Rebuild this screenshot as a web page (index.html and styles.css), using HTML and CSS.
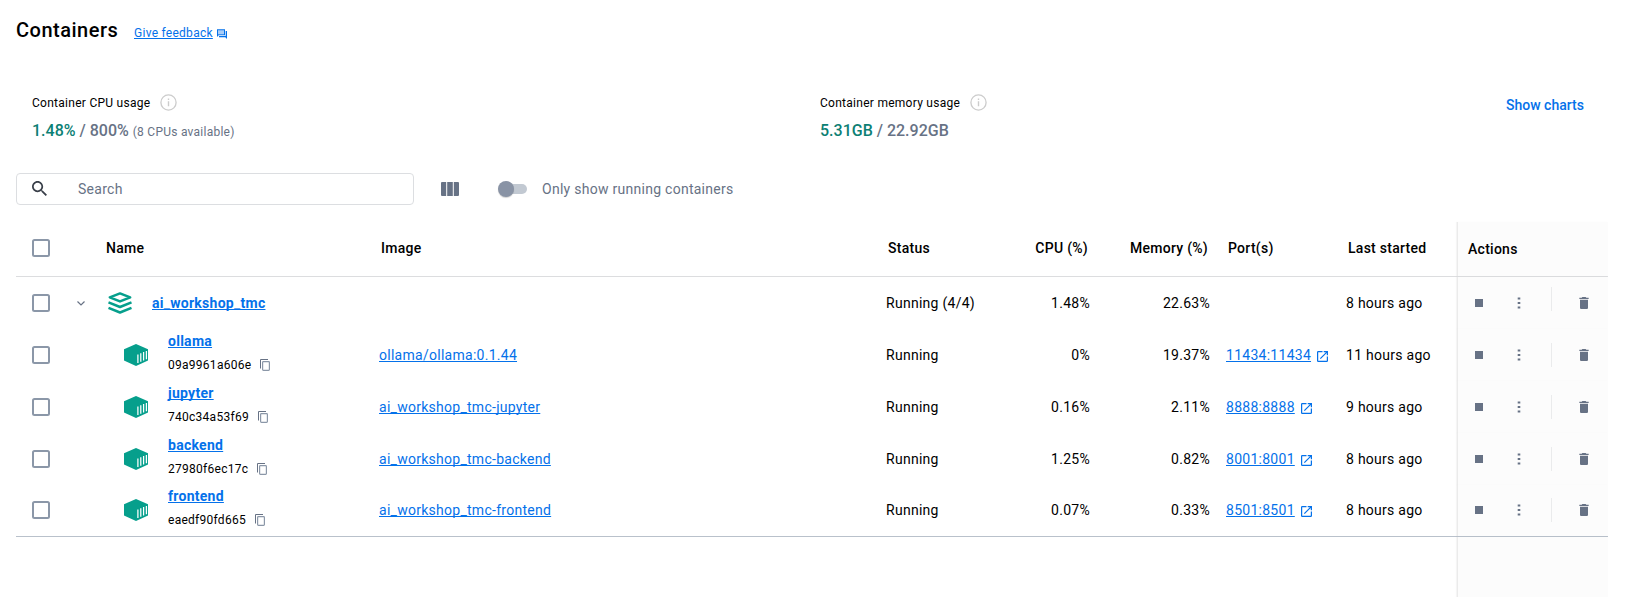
FILE: index.html
```html
<!DOCTYPE html>
<html lang="en">
<head>
<meta charset="utf-8">
<title>Containers</title>
<link rel="stylesheet" href="styles.css">
</head>
<body>
<svg class="sprite" aria-hidden="true">
  <symbol id="i-box" viewBox="0 0 24 22"><path fill="#069f8c" d="M12 0 24 5.3v11.2L12 22 0 16.5V5.3z"/><path stroke="#fff" stroke-width="1.25" d="M13.9 10.4v8.6M16.8 9.3v8.5M19.6 8.1v8.4M22.4 7v8.3" fill="none"/></symbol>
  <symbol id="i-stack" viewBox="0 0 24 22"><g fill="none" stroke="#069f8c" stroke-width="2.5" stroke-linejoin="round"><path d="M12 1.400 22.200 5.300 12 9.400 1.800 5.300z"/><path d="M.5 10.300 12 15l11.500-4.700M.5 15.800 12 20.500l11.500-4.700"/></g></symbol>
  <symbol id="i-copy" viewBox="0 0 10 12"><path fill="none" stroke="#677285" stroke-width="1" d="M.5 9.500v-9H8"/><rect x="2.600" y="2.600" width="6.800" height="8.800" rx=".8" fill="none" stroke="#8b97a8" stroke-width="1.200"/></symbol>
  <symbol id="i-open" viewBox="3 3 18 18"><path fill="#0471ea" d="M19 19H5V5h7V3H5a2 2 0 0 0-2 2v14a2 2 0 0 0 2 2h14c1.100 0 2-.9 2-2v-7h-2v7zM14 3v2h3.590l-9.830 9.830 1.410 1.410L19 6.410V10h2V3h-7z"/></symbol>
  <symbol id="i-dots" viewBox="0 0 4 12"><path fill="#677285" d="M.7.4h2.600v2.200H.7zM.7 4.900h2.600v2.200H.7zM.7 9.400h2.600v2.200H.7z"/></symbol>
  <symbol id="i-trash" viewBox="5 3 14 18"><path fill="#677285" d="M6 19c0 1.100.9 2 2 2h8c1.100 0 2-.9 2-2V7H6v12zM19 4h-3.500l-1-1h-5l-1 1H5v2h14V4z"/></symbol>
  <symbol id="i-info" viewBox="0 0 17 17"><circle cx="8.500" cy="8.500" r="7.600" fill="none" stroke="#ccc" stroke-width="1.300"/><path fill="#ccc" d="M7.800 4.500h1.400V6H7.800zM7.800 7.300h1.400v5H7.800z"/></symbol>
</svg>

<header class="page-header">
  <h1 class="title">Containers</h1>
  <a class="feedback">Give feedback</a>
  <svg class="forum" viewBox="0 0 10 10"><path fill="#a9cdf7" d="M1 1h6v4H1z"/><path fill="#0471ea" d="M0 .2h8v6H1.700L0 7.900zM1 1.200v4h6v-4zM8.700 2H10v8L8.300 8.200H2V7h6.700z"/></svg>
</header>

<section class="usage">
  <div class="stat stat-cpu">
    <div class="stat-label">Container CPU usage<svg class="info"><use href="#i-info"/></svg></div>
    <div class="stat-value"><b>1.48%</b> / 800% <small>(8 CPUs available)</small></div>
  </div>
  <div class="stat stat-memory">
    <div class="stat-label">Container memory usage<svg class="info"><use href="#i-info"/></svg></div>
    <div class="stat-value"><b>5.31GB</b> / 22.92GB</div>
  </div>
  <a class="show-charts">Show charts</a>
</section>

<section class="toolbar">
  <div class="search">
    <svg class="search-icon" viewBox="3 3 17.500 17.500"><path fill="#393f49" d="M15.500 14h-.79l-.28-.27C15.410 12.590 16 11.110 16 9.500 16 5.910 13.090 3 9.500 3S3 5.910 3 9.500 5.910 16 9.500 16c1.610 0 3.090-.59 4.230-1.570l.27.28v.79l5 4.990L20.490 19l-4.990-5zm-6 0C7.010 14 5 11.990 5 9.500S7.010 5 9.500 5 14 7.010 14 9.500 11.990 14 9.500 14z"/></svg>
    <span>Search</span>
  </div>
  <svg class="columns" viewBox="0 0 18 14"><path fill="#677285" d="M1 0h4.200v14H1a1 1 0 0 1-1-1V1a1 1 0 0 1 1-1zM6.200 0h5.600v14H6.200zM12.800 0H17a1 1 0 0 1 1 1v12a1 1 0 0 1-1 1h-4.200z"/></svg>
  <span class="switch"><span class="thumb"></span></span>
  <span class="switch-label">Only show running containers</span>
</section>

<main class="table">
  <div class="row head">
    <div class="check"><i></i></div>
    <div class="name">Name</div>
    <div class="image">Image</div>
    <div class="status">Status</div>
    <div class="num">CPU (%)</div>
    <div class="num">Memory (%)</div>
    <div class="port">Port(s)</div>
    <div class="started">Last started</div>
    <div class="actions">Actions</div>
  </div>

  <div class="row group">
    <div class="check"><i></i><svg class="chevron" viewBox="0 0 8 5"><path d="M.5.500 4 4 7.500.5" fill="none" stroke="#677285" stroke-width="1.200"/></svg></div>
    <div class="name"><svg class="kind"><use href="#i-stack"/></svg><a>ai_workshop_tmc</a></div>
    <div class="image"></div>
    <div class="status">Running (4/4)</div>
    <div class="num">1.48%</div>
    <div class="num">22.63%</div>
    <div class="port"></div>
    <div class="started">8 hours ago</div>
    <div class="actions"><span class="stop"></span><svg class="dots"><use href="#i-dots"/></svg><span class="divider"></span><svg class="trash"><use href="#i-trash"/></svg></div>
  </div>

  <div class="row child">
    <div class="check"><i></i></div>
    <div class="name"><svg class="kind"><use href="#i-box"/></svg><div class="ident"><a>ollama</a><span class="hash">09a9961a606e<svg class="copy"><use href="#i-copy"/></svg></span></div></div>
    <div class="image"><a>ollama/ollama:0.1.44</a></div>
    <div class="status">Running</div>
    <div class="num">0%</div>
    <div class="num">19.37%</div>
    <div class="port"><a>11434:11434</a><svg class="open"><use href="#i-open"/></svg></div>
    <div class="started">11 hours ago</div>
    <div class="actions"><span class="stop"></span><svg class="dots"><use href="#i-dots"/></svg><span class="divider"></span><svg class="trash"><use href="#i-trash"/></svg></div>
  </div>

  <div class="row child">
    <div class="check"><i></i></div>
    <div class="name"><svg class="kind"><use href="#i-box"/></svg><div class="ident"><a>jupyter</a><span class="hash">740c34a53f69<svg class="copy"><use href="#i-copy"/></svg></span></div></div>
    <div class="image"><a>ai_workshop_tmc-jupyter</a></div>
    <div class="status">Running</div>
    <div class="num">0.16%</div>
    <div class="num">2.11%</div>
    <div class="port"><a>8888:8888</a><svg class="open"><use href="#i-open"/></svg></div>
    <div class="started">9 hours ago</div>
    <div class="actions"><span class="stop"></span><svg class="dots"><use href="#i-dots"/></svg><span class="divider"></span><svg class="trash"><use href="#i-trash"/></svg></div>
  </div>

  <div class="row child">
    <div class="check"><i></i></div>
    <div class="name"><svg class="kind"><use href="#i-box"/></svg><div class="ident"><a>backend</a><span class="hash">27980f6ec17c<svg class="copy"><use href="#i-copy"/></svg></span></div></div>
    <div class="image"><a>ai_workshop_tmc-backend</a></div>
    <div class="status">Running</div>
    <div class="num">1.25%</div>
    <div class="num">0.82%</div>
    <div class="port"><a>8001:8001</a><svg class="open"><use href="#i-open"/></svg></div>
    <div class="started">8 hours ago</div>
    <div class="actions"><span class="stop"></span><svg class="dots"><use href="#i-dots"/></svg><span class="divider"></span><svg class="trash"><use href="#i-trash"/></svg></div>
  </div>

  <div class="row child last">
    <div class="check"><i></i></div>
    <div class="name"><svg class="kind"><use href="#i-box"/></svg><div class="ident"><a>frontend</a><span class="hash">eaedf90fd665<svg class="copy"><use href="#i-copy"/></svg></span></div></div>
    <div class="image"><a>ai_workshop_tmc-frontend</a></div>
    <div class="status">Running</div>
    <div class="num">0.07%</div>
    <div class="num">0.33%</div>
    <div class="port"><a>8501:8501</a><svg class="open"><use href="#i-open"/></svg></div>
    <div class="started">8 hours ago</div>
    <div class="actions"><span class="stop"></span><svg class="dots"><use href="#i-dots"/></svg><span class="divider"></span><svg class="trash"><use href="#i-trash"/></svg></div>
  </div>
  <div class="row rest"><div class="actions"></div></div>
</main>
</body>
</html>
```
FILE: styles.css
```css
* { box-sizing: border-box; }
html, body { height: 100%; }
body {
  margin: 0;
  padding-left: 16px;
  display: flex;
  flex-direction: column;
  overflow: hidden;
  background: #fff;
  color: #000;
  font: 400 14px/20px Roboto, sans-serif;
  letter-spacing: .27px;
}
svg { display: block; flex: none; }
a {
  color: #0471ea;
  text-decoration: underline;
  text-decoration-thickness: 1px;
  text-underline-offset: 1px;
  text-decoration-skip-ink: none;
}
.sprite { position: absolute; width: 0; height: 0; }

.page-header { display: flex; height: 91px; padding-top: 18px; flex: none; }
.title { margin: 0; width: 118px; font: 500 20px/24px Roboto, sans-serif; letter-spacing: .5px; }
.feedback { font-size: 12px; line-height: 16px; padding-top: 7px; }
.forum { width: 10px; height: 10px; margin: 11px 0 0 4px; }

.usage { display: flex; height: 82px; padding-left: 16px; flex: none; }
.stat-cpu { width: 788px; }
.stat-memory { width: 686px; }
.stat-label { display: flex; align-items: center; height: 24px; font-size: 12px; }
.info { width: 17px; height: 17px; margin-left: 9.500px; margin-top: -1px; }
.stat-value { font-weight: 500; font-size: 16px; line-height: 20px; margin-top: 6px; color: #677285; letter-spacing: 0; }
.stat-value b { font-weight: 500; color: #0c8074; }
.stat-value small { font-size: 12px; font-weight: 400; letter-spacing: .25px; }
.show-charts { font-weight: 500; letter-spacing: 0; text-decoration: none; padding-top: 4px; }

.toolbar { display: flex; align-items: center; height: 32px; flex: none; color: #677285; }
.search { display: flex; align-items: center; width: 398px; height: 32px; border: 1px solid #dcdee1; border-radius: 4px; padding-left: 15px; }
.search-icon { width: 15px; height: 15px; margin-right: 31px; margin-top: -1px; }
.columns { width: 18px; height: 14px; margin-left: 27px; }
.switch { width: 28px; height: 10px; margin-left: 40px; border-radius: 5px; background: #c2c9d2; display: flex; align-items: center; }
.thumb { width: 16px; height: 16px; margin-left: -1px; border-radius: 50%; background: #8993a5; box-shadow: 0 1px 1px rgba(0, 0, 0, .18); }
.switch-label { margin-left: 15px; }

.table { display: flex; flex-direction: column; flex: 1; width: 1592px; padding-top: 17px; }
.row {
  display: grid;
  grid-template-columns: 80px 275px 507px 100px 120px 120px 120px 120px 150px;
  height: 52px;
  align-items: center;
  flex: none;
}
.check { display: flex; align-items: center; padding-left: 16px; }
.check i { width: 18px; height: 18px; border: 2px solid #8b97a8; border-radius: 2.500px; }
.chevron { width: 8px; height: 5px; margin-left: 27px; }
.image, .status, .port, .started { padding-left: 8px; }
.num { text-align: right; padding-right: 8px; }
.name { display: flex; align-items: center; padding-left: 12px; }
.kind { width: 24px; height: 22px; margin-right: 20px; }
.name a { font-weight: 700; }
.child .name { padding-left: 28px; }
.ident { display: flex; flex-direction: column; align-items: flex-start; padding-bottom: 5px; }
.hash { display: flex; align-items: center; font-size: 12px; line-height: 20px; margin-top: 4px; }
.copy { width: 10px; height: 12px; margin-left: 9px; }
.port { display: flex; align-items: center; }
.open { width: 11px; height: 11px; margin: 2px 0 0 6px; }

.actions {
  display: flex;
  align-items: center;
  align-self: stretch;
  padding-left: 17px;
  background: #fcfcfc;
  border-left: 1px solid #ebebeb;
  margin-left: -1px;
  box-shadow: -1px 0 1px rgba(0, 0, 0, .04);
}
.stop { width: 8px; height: 8px; background: #677285; }
.dots { width: 4px; height: 12px; margin-left: 34px; }
.divider { width: 1px; height: 24px; margin-left: 30px; background: #eaebec; }
.group .divider { margin-top: -8px; }
.trash { width: 10px; height: 12px; margin-left: 27px; }

.head { height: 55px; border-bottom: 1px solid #dcdddf; font-weight: 500; }
.head > div:not(.actions) { padding-bottom: 2px; }
.head .name { padding-left: 10px; }
.head .image, .head .status, .head .port, .head .started { padding-left: 10px; }
.head .num { padding-right: 10px; }
.head .actions { padding: 0 0 0 10px; }
.last { border-bottom: 1px solid #b9c1cb; }
.last > div { padding-bottom: 1px; }
.rest { flex: 1; }
.rest .actions { grid-column: 9; }
```
